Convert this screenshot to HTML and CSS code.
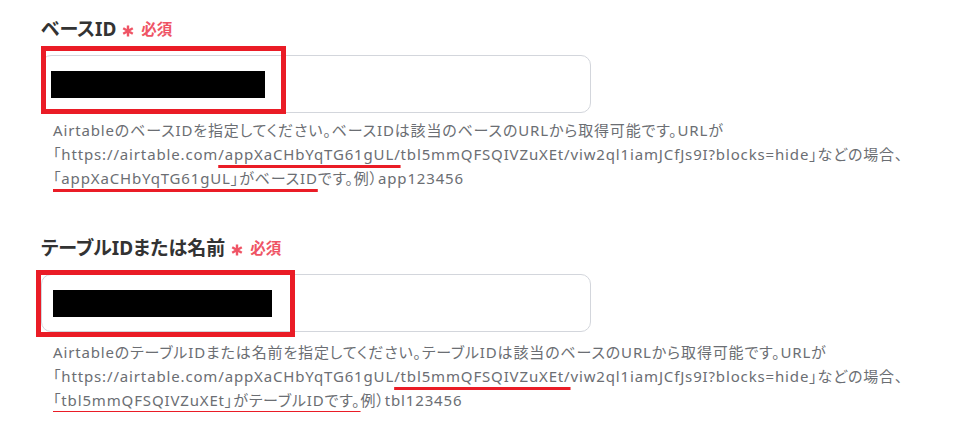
FILE: index.html
```html
<!DOCTYPE html>
<html lang="ja">
<head>
    <meta charset="UTF-8">
    <title>Airtable設定</title>
    <link rel="stylesheet" href="styles.css">
</head>
<body>
    <div class="form">
        <div class="field">
            <div class="field-label">ベースID<span class="req"><svg class="star" viewBox="0 0 12 12"><path d="M6 0.5V11.5M1.2 3.2L10.8 8.8M1.2 8.8L10.8 3.2"/></svg>必須</span></div>
            <div class="input-wrap">
                <div class="input"><span class="redact redact-base"></span></div>
                <div class="mark mark-base"></div>
            </div>
            <p class="help">
                AirtableのベースIDを指定してください。ベースIDは該当のベースのURLから取得可能です。URLが<br>
                「https://airtable.com<span class="hl">/appXaCHbYqTG61gUL/</span>tbl5mmQFSQIVZuXEt/viw2ql1iamJCfJs9I?blocks=hide」などの場合、<br>
                <span class="hl">「appXaCHbYqTG61gUL」がベースID</span>です。例）app123456
            </p>
        </div>

        <div class="field field-second">
            <div class="field-label">テーブルIDまたは名前<span class="req"><svg class="star" viewBox="0 0 12 12"><path d="M6 0.5V11.5M1.2 3.2L10.8 8.8M1.2 8.8L10.8 3.2"/></svg>必須</span></div>
            <div class="input-wrap">
                <div class="input"><span class="redact redact-table"></span></div>
                <div class="mark mark-table"></div>
            </div>
            <p class="help">
                AirtableのテーブルIDまたは名前を指定してください。テーブルIDは該当のベースのURLから取得可能です。URLが<br>
                「https://airtable.com/appXaCHbYqTG61gUL<span class="hl">/tbl5mmQFSQIVZuXEt/</span>viw2ql1iamJCfJs9I?blocks=hide」などの場合、<br>
                <span class="hl">「tbl5mmQFSQIVZuXEt」がテーブルIDです。</span>例）tbl123456
            </p>
        </div>
    </div>
</body>
</html>
```

FILE: styles.css
```css
body {
    margin: 0;
    background: #fff;
    font-family: "Noto Sans", "Noto Sans CJK JP", sans-serif;
    font-feature-settings: "palt";
}
.form {
    padding: 17px 0 0 41px;
}
.field-second {
    margin-top: 46px;
}
.field-label {
    display: flex;
    align-items: center;
    font-size: 19px;
    line-height: 24px;
    font-weight: bold;
    color: #333;
}
.req {
    display: flex;
    align-items: center;
    margin-left: 6px;
    font-size: 15.5px;
    font-weight: bold;
    color: #ef5465;
}
.star {
    width: 12px;
    height: 12px;
    margin: 3px 7px 0 0;
    fill: none;
    stroke: #ef5465;
    stroke-width: 2.4;
}
.input-wrap {
    position: relative;
    margin-top: 14px;
    width: 550px;
}
.input {
    display: flex;
    align-items: center;
    height: 56px;
    padding-left: 9px;
    border: 1px solid #d3d6dc;
    border-radius: 10px;
}
.redact {
    display: block;
    height: 27px;
    background: #000;
}
.redact-base { width: 214px; }
.redact-table { width: 219px; margin-left: 2px; }
.mark {
    position: absolute;
    border: 5px solid #ea1c26;
}
.mark-base {
    left: 0;
    top: -9px;
    width: 235px;
    height: 58px;
}
.mark-table {
    left: -5px;
    top: -4px;
    width: 249px;
    height: 57px;
}
.help {
    margin: 5px 0 0 12px;
    font-size: 15px;
    line-height: 24px;
    letter-spacing: 0.85px;
    color: #6b6e73;
}
.field-second .help {
    margin-top: 8px;
}
.hl {
    text-decoration: underline;
    text-decoration-color: #ea1c26;
    text-decoration-thickness: 3px;
    text-underline-offset: 5px;
    text-decoration-skip-ink: none;
}
```
